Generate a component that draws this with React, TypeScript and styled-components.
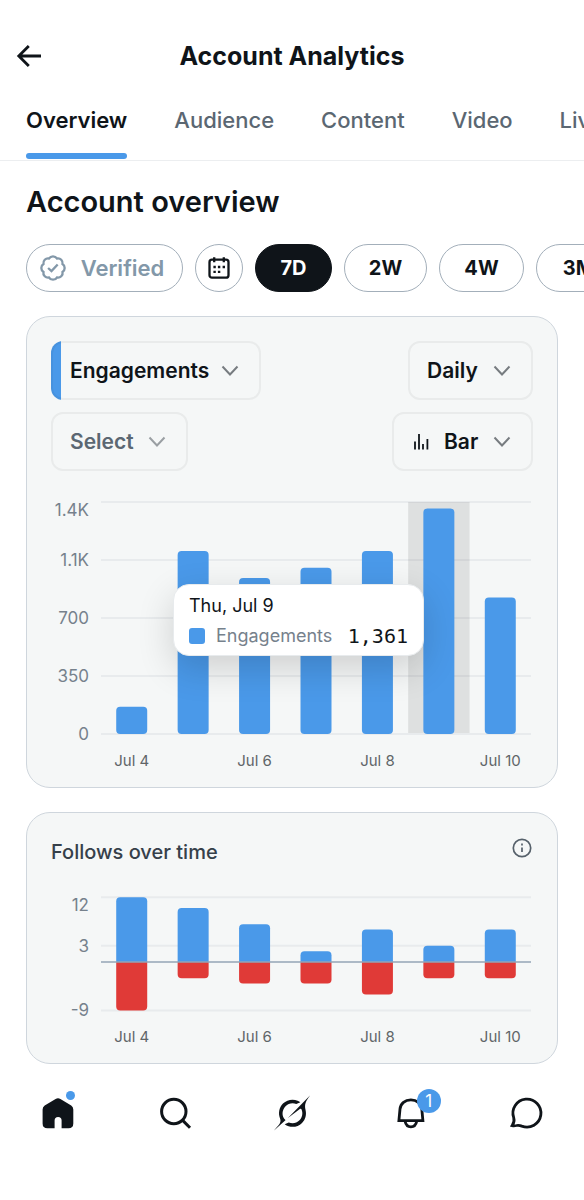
import React from "react";
import styled, { createGlobalStyle } from "styled-components";

const sans = `Inter, Roboto, "Liberation Sans", sans-serif`;
const mono = `"DejaVu Sans Mono", "Liberation Mono", monospace`;

const color = {
  ink: "#0f1419",
  muted: "#5b6772",
  axis: "#76818c",
  blue: "#4a99e9",
  red: "#e03a37",
  card: "#f5f7f7",
  cardBorder: "#cfd6dd",
  hairline: "#e8ebed",
  chipBorder: "#a3afba",
  verified: "#8398a9",
};

const GlobalStyle = createGlobalStyle`
  *, *::before, *::after { box-sizing: border-box; }
  body {
    margin: 0;
    background: #fff;
    color: ${color.ink};
    font-family: ${sans};
    -webkit-font-smoothing: antialiased;
  }
  button, select { font: inherit; color: inherit; }
`;

const Page = styled.div`
  display: flex;
  flex-direction: column;
  min-height: 100vh;
  overflow-x: hidden;
`;

const Header = styled.header`
  display: grid;
  grid-template-columns: 48px 1fr 48px;
  align-items: center;
  height: 64px;
  margin-top: 24px;
  padding: 0 11px;
`;

const IconButton = styled.button`
  display: flex;
  align-items: center;
  justify-content: center;
  width: 36px;
  height: 36px;
  padding: 0;
  border: 0;
  background: none;
  cursor: pointer;
`;

const Title = styled.h1`
  margin: 0;
  text-align: center;
  font-size: 25px;
  line-height: 32px;
  font-weight: 700;
`;

const Tabs = styled.nav`
  display: flex;
  gap: 47px;
  height: 73px;
  padding: 0 26px;
  border-bottom: 1px solid #eceef0;
  overflow: hidden;
`;

const Tab = styled.a<{ $active?: boolean }>`
  display: flex;
  flex: none;
  flex-direction: column;
  justify-content: space-between;
  padding: 16px 0 1px;
  color: ${(p) => (p.$active ? color.ink : color.muted)};
  font-size: 22px;
  line-height: 32px;
  font-weight: ${(p) => (p.$active ? 600 : 500)};
  text-decoration: none;

  &::after {
    content: "";
    height: 6px;
    border-radius: 3px;
    background: ${(p) => (p.$active ? color.blue : "transparent")};
  }
`;

const Main = styled.main`
  display: flex;
  flex-direction: column;
  gap: 24px;
  padding: 23px 26px 0;
`;

const Heading = styled.h2`
  margin: 0;
  font-size: 29px;
  line-height: 36px;
  font-weight: 600;
`;

const Chips = styled.div`
  display: flex;
  gap: 12px;
  margin-right: -26px;
  overflow: hidden;
`;

const Chip = styled.button<{ $width: number; $active?: boolean; $soft?: boolean }>`
  display: flex;
  flex: none;
  align-items: center;
  justify-content: center;
  gap: 14px;
  width: ${(p) => p.$width}px;
  height: 48px;
  padding: ${(p) => (p.$soft ? "0 6px 0 0" : 0)};
  border: 1px solid ${(p) => (p.$active ? color.ink : color.chipBorder)};
  border-radius: 24px;
  background: ${(p) => (p.$active ? color.ink : "#fff")};
  color: ${(p) => (p.$active ? "#fff" : p.$soft ? color.verified : color.ink)};
  font-size: ${(p) => (p.$soft ? 22 : 20)}px;
  font-weight: ${(p) => (p.$soft ? 600 : 700)};
  cursor: pointer;
`;

const Card = styled.section`
  padding: 24px 24px 15px;
  border: 1px solid ${color.cardBorder};
  border-radius: 24px;
  background: ${color.card};
`;

const Controls = styled.div`
  display: flex;
  flex-direction: column;
  gap: 12px;
`;

const ControlRow = styled.div`
  display: flex;
  justify-content: space-between;
`;

const Picker = styled.label<{ $width: number; $accent?: boolean }>`
  position: relative;
  display: flex;
  align-items: center;
  width: ${(p) => p.$width}px;
  height: 59px;
  border: 2px solid rgba(15, 20, 25, 0.05);
  border-radius: 12px;
  overflow: hidden;
  background: ${(p) => (p.$accent ? `linear-gradient(to right, ${color.blue} 10px, transparent 10px) border-box` : "none")};
`;

const PickerSelect = styled.select<{ $muted?: boolean; $icon?: boolean }>`
  appearance: none;
  width: 100%;
  height: 100%;
  padding: 0 36px 0 ${(p) => (p.$icon ? 50 : 17)}px;
  border: 0;
  background: none;
  color: ${(p) => (p.$muted ? color.muted : color.ink)};
  font-size: 21px;
  font-weight: 600;
  cursor: pointer;
`;

const Chevron = styled.svg`
  position: absolute;
  right: 20px;
  pointer-events: none;
`;

const PickerIcon = styled.svg`
  position: absolute;
  left: 18px;
  pointer-events: none;
`;

const ChartBox = styled.div<{ $gap: number }>`
  position: relative;
  margin-top: ${(p) => p.$gap}px;
`;

const ChartSvg = styled.svg`
  display: block;
  width: 100%;
  height: auto;
  font-family: ${sans};
`;

const Tooltip = styled.div`
  position: absolute;
  top: 94px;
  left: 122px;
  width: 251px;
  padding: 7px 15px 3px;
  border: 1px solid #e8ebed;
  border-radius: 16px;
  background: #fff;
  box-shadow: 0 12px 36px rgba(0, 0, 0, 0.16);
  font-size: 18px;
`;

const TipTitle = styled.div`
  line-height: 28px;
`;

const TipRow = styled.div`
  display: flex;
  align-items: center;
  gap: 11px;
  line-height: 32px;
  color: ${color.axis};
`;

const Swatch = styled.span`
  flex: none;
  width: 16px;
  height: 16px;
  border-radius: 3px;
  background: ${color.blue};
`;

const TipValue = styled.span`
  margin-left: auto;
  color: ${color.ink};
  font-family: ${mono};
  font-size: 20px;
`;

const CardHead = styled.div`
  display: flex;
  justify-content: space-between;
  align-items: flex-start;
`;

const CardTitle = styled.h3`
  margin: 0;
  color: #36404a;
  font-size: 20px;
  line-height: 30px;
  font-weight: 500;
`;

const InfoButton = styled(IconButton)`
  width: 22px;
  height: 22px;
`;

const BottomNav = styled.nav`
  display: grid;
  grid-template-columns: repeat(5, 1fr);
  justify-items: center;
  padding: 31px 0 64px;
`;

const NavItem = styled.a`
  position: relative;
  display: block;
  width: 36px;
  height: 36px;
  color: ${color.ink};
`;

const Dot = styled.span`
  position: absolute;
  top: -4px;
  right: 1px;
  width: 9px;
  height: 9px;
  border-radius: 50%;
  background: ${color.blue};
`;

const Badge = styled.span`
  position: absolute;
  top: -6px;
  right: -14px;
  width: 24px;
  height: 24px;
  border-radius: 50%;
  background: ${color.blue};
  color: #fff;
  font-size: 17px;
  line-height: 24px;
  text-align: center;
`;

type PickerProps = {
  label: string;
  options: string[];
  width: number;
  accent?: boolean;
  muted?: boolean;
  icon?: boolean;
};

function PickerField({ label, options, width, accent, muted, icon }: PickerProps) {
  return (
    <Picker $width={width} $accent={accent}>
      {icon && (
        <PickerIcon width="18" height="18" viewBox="0 0 18 18" stroke={color.ink} strokeWidth="1.8">
          <path d="M3 8.500v8M7 1v15.500M11 11v5.500M15.400 6v10.500" />
        </PickerIcon>
      )}
      <PickerSelect aria-label={label} $muted={muted} $icon={icon}>
        {options.map((o) => (
          <option key={o}>{o}</option>
        ))}
      </PickerSelect>
      <Chevron width="18" height="12" viewBox="0 0 18 12" fill="none" stroke={muted ? "#9a9fa3" : "#777c80"} strokeWidth="2">
        <path d="M1.500 1.500L9 9.500L16.500 1.500" />
      </Chevron>
    </Picker>
  );
}

const days = ["Jul 4", "Jul 5", "Jul 6", "Jul 7", "Jul 8", "Jul 9", "Jul 10"];
const plotLeft = 50;
const plotRight = 480;
const step = (plotRight - plotLeft) / days.length;
const barWidth = 31;
const center = (i: number) => plotLeft + step * (i + 0.5);

const DayLabels = ({ y }: { y: number }) => (
  <g fontSize="15" fill="#606568" textAnchor="middle">
    {days.map((d, i) => (i % 2 === 0 ? <text key={d} x={center(i)} y={y}>{d}</text> : null))}
  </g>
);

const engagements = [165, 1105, 942, 1003, 1105, 1361, 823];
const engagementTicks = [
  { label: "1.4K", line: 12, text: 26 },
  { label: "1.1K", line: 70, text: 76 },
  { label: "700", line: 128, text: 134 },
  { label: "350", line: 186, text: 192 },
  { label: "0", line: 244, text: 250 },
];

function EngagementChart() {
  const hovered = 5;
  return (
    <ChartSvg viewBox="0 0 482 282" role="img" aria-label="Engagements per day">
      <g stroke={color.hairline} strokeWidth="2">
        {engagementTicks.map((t) => (
          <line key={t.label} x1={plotLeft} x2={plotRight} y1={t.line} y2={t.line} />
        ))}
      </g>
      <rect x={plotLeft + step * hovered} y="12" width={step} height="231" fill="#000" fillOpacity="0.09" />
      {engagements.map((v, i) => {
        const h = (v / 1400) * 232;
        return <rect key={i} x={center(i) - barWidth / 2} y={244 - h} width={barWidth} height={h} rx="4" fill={color.blue} />;
      })}
      <g fontSize="17" fill={color.axis} textAnchor="end">
        {engagementTicks.map((t) => (
          <text key={t.label} x="38" y={t.text}>{t.label}</text>
        ))}
      </g>
      <DayLabels y={276} />
    </ChartSvg>
  );
}

const gained = [12, 10, 7, 2, 6, 3, 6];
const lost = [9, 3, 4, 4, 6, 3, 3];

function FollowsChart() {
  const zero = 80;
  const unit = 5.4;
  const ticks = [
    { label: "12", value: 12, text: 29 },
    { label: "3", value: 3, text: 70 },
    { label: "-9", value: -9, text: 134 },
  ];
  const bar = (i: number, dir: number, v: number) => {
    const x = center(i) - barWidth / 2;
    const end = zero - dir * v * unit;
    const r = 4;
    const sweep = dir > 0 ? 1 : 0;
    return `M${x} ${zero}V${end + dir * r}a${r} ${r} 0 0 ${sweep} ${r} ${-dir * r}h${barWidth - 2 * r}a${r} ${r} 0 0 ${sweep} ${r} ${dir * r}V${zero}Z`;
  };
  return (
    <ChartSvg viewBox="0 0 482 166" role="img" aria-label="Follows and unfollows per day">
      <g stroke={color.hairline} strokeWidth="2">
        {ticks.map((t) => (
          <line key={t.label} x1={plotLeft} x2={plotRight} y1={zero - t.value * unit} y2={zero - t.value * unit} />
        ))}
      </g>
      {gained.map((v, i) => <path key={i} d={bar(i, 1, v)} fill={color.blue} />)}
      {lost.map((v, i) => <path key={i} d={bar(i, -1, v)} fill={color.red} />)}
      <line x1={plotLeft} x2={plotRight} y1={zero} y2={zero} stroke="#93a5b6" strokeWidth="1.500" />
      <g fontSize="17" fill={color.axis} textAnchor="end">
        {ticks.map((t) => (
          <text key={t.label} x="38" y={t.text}>{t.label}</text>
        ))}
      </g>
      <DayLabels y={160} />
    </ChartSvg>
  );
}

export default function App() {
  return (
    <Page>
      <GlobalStyle />
      <Header>
        <IconButton aria-label="Back">
          <svg width="26" height="24" viewBox="0 0 26 24" fill="none" stroke={color.ink} strokeWidth="2.800">
            <path d="M12.800 2L2.800 12l10 10M3 12H25" />
          </svg>
        </IconButton>
        <Title>Account Analytics</Title>
      </Header>
      <Tabs>
        <Tab href="#overview" $active>Overview</Tab>
        <Tab href="#audience">Audience</Tab>
        <Tab href="#content">Content</Tab>
        <Tab href="#video">Video</Tab>
        <Tab href="#live">Live</Tab>
      </Tabs>
      <Main>
        <Heading>Account overview</Heading>
        <Chips>
          <Chip $width={157} $soft>
            <svg width="28" height="28" viewBox="0 0 24 24" fill="none" stroke="currentColor" strokeWidth="2">
              <path d="M3.850 8.620a4 4 0 0 1 4.780-4.770 4 4 0 0 1 6.740 0 4 4 0 0 1 4.780 4.780 4 4 0 0 1 0 6.740 4 4 0 0 1-4.770 4.780 4 4 0 0 1-6.750 0 4 4 0 0 1-4.780-4.770 4 4 0 0 1 0-6.760Z" />
              <path d="M7.800 12l2.900 2.700 5.300-5.700" />
            </svg>
            Verified
          </Chip>
          <Chip $width={48} aria-label="Pick dates">
            <svg width="24" height="24" viewBox="0 0 24 24" fill="none" stroke={color.ink} strokeWidth="2.300">
              <rect x="2.500" y="3.700" width="19" height="18" rx="2.500" />
              <path d="M7.200 1.200v5M16.800 1.200v5" />
              <path d="M6.400 11h2.400M10.900 11h2.400M15.600 11h2.400M6.400 15.800h2.400M10.900 15.800h2.400" />
            </svg>
          </Chip>
          <Chip $width={77} $active>7D</Chip>
          <Chip $width={83}>2W</Chip>
          <Chip $width={85}>4W</Chip>
          <Chip $width={85}>3M</Chip>
        </Chips>
        <Card>
          <Controls>
            <ControlRow>
              <PickerField label="Primary metric" options={["Engagements", "Impressions"]} width={210} accent />
              <PickerField label="Interval" options={["Daily", "Weekly"]} width={125} />
            </ControlRow>
            <ControlRow>
              <PickerField label="Secondary metric" options={["Select"]} width={137} muted />
              <PickerField label="Chart type" options={["Bar", "Line"]} width={141} icon />
            </ControlRow>
          </Controls>
          <ChartBox $gap={19}>
            <EngagementChart />
            <Tooltip role="tooltip">
              <TipTitle>Thu, Jul 9</TipTitle>
              <TipRow>
                <Swatch />
                Engagements
                <TipValue>1,361</TipValue>
              </TipRow>
            </Tooltip>
          </ChartBox>
        </Card>
        <Card>
          <CardHead>
            <CardTitle>Follows over time</CardTitle>
            <InfoButton aria-label="About this chart">
              <svg width="20" height="20" viewBox="0 0 20 20" fill="none" stroke="#56616b" strokeWidth="1.700">
                <circle cx="10" cy="10" r="8.700" />
                <path d="M10 9.500v4.500M10 5.600v2" />
              </svg>
            </InfoButton>
          </CardHead>
          <ChartBox $gap={15}>
            <FollowsChart />
          </ChartBox>
        </Card>
      </Main>
      <BottomNav>
        <NavItem href="#home" aria-label="Home">
          <svg width="36" height="36" viewBox="0 0 36 36" fill="currentColor">
            <path d="M15.600 3.900Q18 2.400 20.400 3.900L31.200 10.600Q33.300 12 33.300 14.500V28.500Q33.300 33.300 28.500 33.300H21.600V25.500a3.500 3.500 0 0 0-7 0V33.300H7.400Q2.600 33.300 2.600 28.500V14.500Q2.600 12 4.700 10.600Z" />
          </svg>
          <Dot />
        </NavItem>
        <NavItem href="#search" aria-label="Search">
          <svg width="36" height="36" viewBox="0 0 36 36" fill="none" stroke="currentColor" strokeWidth="3">
            <circle cx="16.800" cy="16.500" r="12.200" />
            <path d="M25.400 25.100L33 32.700" />
          </svg>
        </NavItem>
        <NavItem href="#grok" aria-label="Grok">
          <svg width="36" height="36" viewBox="0 0 33 32" fill="currentColor">
            <path d="M12.745 20.540l10.970-8.190c.539-.4 1.307-.244 1.564.38 1.349 3.288.746 7.241-1.938 9.955-2.683 2.714-6.417 3.310-9.830 1.954l-3.728 1.745c5.347 3.697 11.840 2.782 15.898-1.324 3.219-3.255 4.216-7.692 3.284-11.693l.008.009c-1.351-5.878.332-8.227 3.782-13.031L33 0l-4.540 4.590v-.014L12.743 20.544m-2.263 1.987c-3.837-3.707-3.175-9.446.1-12.755 2.420-2.449 6.388-3.448 9.852-1.979l3.720-1.737c-.67-.49-1.530-1.017-2.515-1.387-4.455-1.854-9.789-.931-13.410 2.728-3.483 3.523-4.579 8.940-2.697 13.561 1.405 3.454-.899 5.898-3.220 8.364C1.490 30.200.666 31.074 0 32l10.478-9.466" />
          </svg>
        </NavItem>
        <NavItem href="#notifications" aria-label="Notifications">
          <svg width="36" height="36" viewBox="0 0 36 36" fill="none" stroke="currentColor" strokeWidth="2.800">
            <path d="M7.900 25.600L9 14C9.600 8.500 14 4.800 19.900 4.800S30.200 8.500 30.800 14L31.900 25.600Z" />
            <path d="M14 26C14.800 30 17 31.900 19.900 31.900S25 30 25.800 26" />
          </svg>
          <Badge>1</Badge>
        </NavItem>
        <NavItem href="#messages" aria-label="Messages">
          <svg width="36" height="36" viewBox="0 0 36 36" fill="none" stroke="currentColor" strokeWidth="2.800">
            <path d="M4.200 30.600C6.400 27.500 6.400 25 5.700 22.600A14 14 0 1 1 13.800 31.100Q11 29.900 8.500 30.500Q6 31 4.200 30.600Z" />
          </svg>
        </NavItem>
      </BottomNav>
    </Page>
  );
}
